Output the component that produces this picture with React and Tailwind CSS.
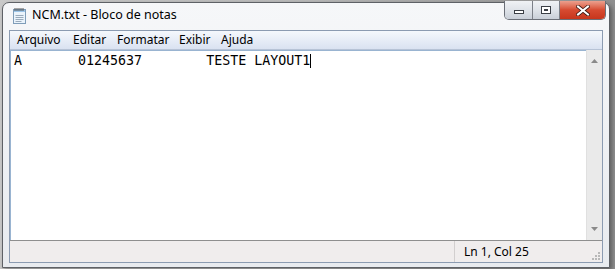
import React from 'react'

const ui = { fontFamily: '"Noto Sans", "Open Sans", sans-serif' }
const mono = { fontFamily: '"DejaVu Sans Mono", "Liberation Mono", monospace' }

function NotepadIcon() {
  return (
    <svg width="16" height="17" viewBox="0 0 16 17">
      <rect x="1.5" y="2.5" width="12" height="14" fill="#eaf3fb" stroke="#7f9db9" />
      <rect x="2" y="3" width="11" height="2" fill="#9cc6ea" />
      <line x1="3.5" y1="8.5" x2="11.5" y2="8.5" stroke="#9ab" />
      <line x1="3.5" y1="10.5" x2="11.5" y2="10.5" stroke="#9ab" />
      <line x1="3.5" y1="12.5" x2="11.5" y2="12.5" stroke="#9ab" />
      <line x1="3.5" y1="14.5" x2="9.5" y2="14.5" stroke="#9ab" />
      <path d="M3 1v3M5 1v3M7 1v3M9 1v3M11 1v3" stroke="#555" />
    </svg>
  )
}

function CaptionButtons() {
  return (
    <div className="flex h-[19px] -mt-[2px] rounded-b-[5px] border border-t-0 border-[#6b6f78] overflow-hidden">
      <div className="w-[28px] flex items-center justify-center bg-gradient-to-b from-[#f0f2f5] via-[#dfe3e9] to-[#c9cfd8] border-r border-[#7c8088]">
        <div className="w-[10px] h-[4px] mt-[4px] border border-[#3b3f46] bg-white" />
      </div>
      <div className="w-[27px] flex items-center justify-center bg-gradient-to-b from-[#f0f2f5] via-[#dfe3e9] to-[#c9cfd8] border-r border-[#7c8088]">
        <div className="w-[10px] h-[8px] border border-[#3b3f46] bg-white flex items-center justify-center">
          <div className="w-[4px] h-[2px] border border-[#3b3f46]" />
        </div>
      </div>
      <div className="w-[45px] flex items-center justify-center bg-gradient-to-b from-[#eba08e] via-[#d64a30] to-[#c7351b]">
        <svg width="14" height="11" viewBox="0 0 14 11">
          <path d="M2 1.5L12 9.5M12 1.5L2 9.5" stroke="#3d1a14" strokeWidth="3.6" strokeLinecap="square" />
          <path d="M2 1.5L12 9.5M12 1.5L2 9.5" stroke="#ffffff" strokeWidth="2" strokeLinecap="square" />
        </svg>
      </div>
    </div>
  )
}

function Triangle({ up }) {
  return (
    <svg width="7" height="4" viewBox="0 0 7 4">
      <path d={up ? 'M0 4L3.5 0L7 4Z' : 'M0 0L3.5 4L7 0Z'} fill="#8a8a8a" />
    </svg>
  )
}

export default function App() {
  const menus = [
    ['Arquivo', 'w-[56px]'],
    ['Editar', 'w-[44px]'],
    ['Formatar', 'w-[62px]'],
    ['Exibir', 'w-[42px]'],
    ['Ajuda', 'w-[40px]'],
  ]

  return (
    <div className="w-[615px] h-[269px] bg-gradient-to-r from-[#c9c9c9] via-[#b8b8b8] to-[#8f8f8f] overflow-hidden">
      <div className="ml-[2px] mt-[2px] w-[608px] h-[266px] rounded-t-[7px] border border-[#5e6166] bg-gradient-to-b from-[#f6f7f9] to-[#e8ebef] flex flex-col shadow-[2px_2px_4px_rgba(0,0,0,0.35)]">
        {/* Title bar */}
        <div className="h-[27px] flex items-start pl-[9px] pr-[3px]">
          <div className="mt-[4px]">
            <NotepadIcon />
          </div>
          <span className="ml-[4px] mt-[3px] text-[12.5px] text-black" style={ui}>
            NCM.txt - Bloco de notas
          </span>
          <div className="ml-auto">
            <CaptionButtons />
          </div>
        </div>

        {/* Client */}
        <div className="mx-[6px] mb-[4px] flex-1 flex flex-col border border-[#8b9bb1] bg-white">
          <div className="h-[19px] flex items-center pl-[7px] bg-gradient-to-b from-[#f5f8fc] via-[#e7edf7] to-[#dae2f1] border-b border-[#b7c3d6]">
            {menus.map(([m, w]) => (
              <span key={m} className={`${w} text-[12px] text-black`} style={ui}>{m}</span>
            ))}
          </div>

          <div className="flex-1 flex border-b border-[#8f8f8f]">
            <div className="flex-1 border-l border-t border-[#99b4d1] pl-[3px] pt-[3px] text-[13.3px] leading-[14px]" style={mono}>
              <span className="whitespace-pre text-black">
                {'A       01245637        TESTE LAYOUT1'}
              </span>
              <span className="inline-block w-[1px] h-[14px] bg-black align-[-3px]" />
            </div>
            <div className="w-[16px] bg-[#eaeaea] border-l border-[#e0e0e0] flex flex-col justify-between items-center py-[9px]">
              <Triangle up />
              <Triangle />
            </div>
          </div>

          <div className="h-[21px] flex items-center bg-[#f0eded]">
            <div className="w-[445px] h-full border-r border-[#d2cfcf]" />
            <span className="ml-[9px] text-[12px] text-black" style={ui}>Ln 1, Col 25</span>
            <div className="ml-auto mr-[1px] mt-[9px]">
              <svg width="10" height="10" viewBox="0 0 10 10">
                <g fill="#b8b8b8">
                  <rect x="7" y="1" width="2" height="2" />
                  <rect x="4" y="4" width="2" height="2" />
                  <rect x="7" y="4" width="2" height="2" />
                  <rect x="1" y="7" width="2" height="2" />
                  <rect x="4" y="7" width="2" height="2" />
                  <rect x="7" y="7" width="2" height="2" />
                </g>
              </svg>
            </div>
          </div>
        </div>
      </div>
    </div>
  )
}
